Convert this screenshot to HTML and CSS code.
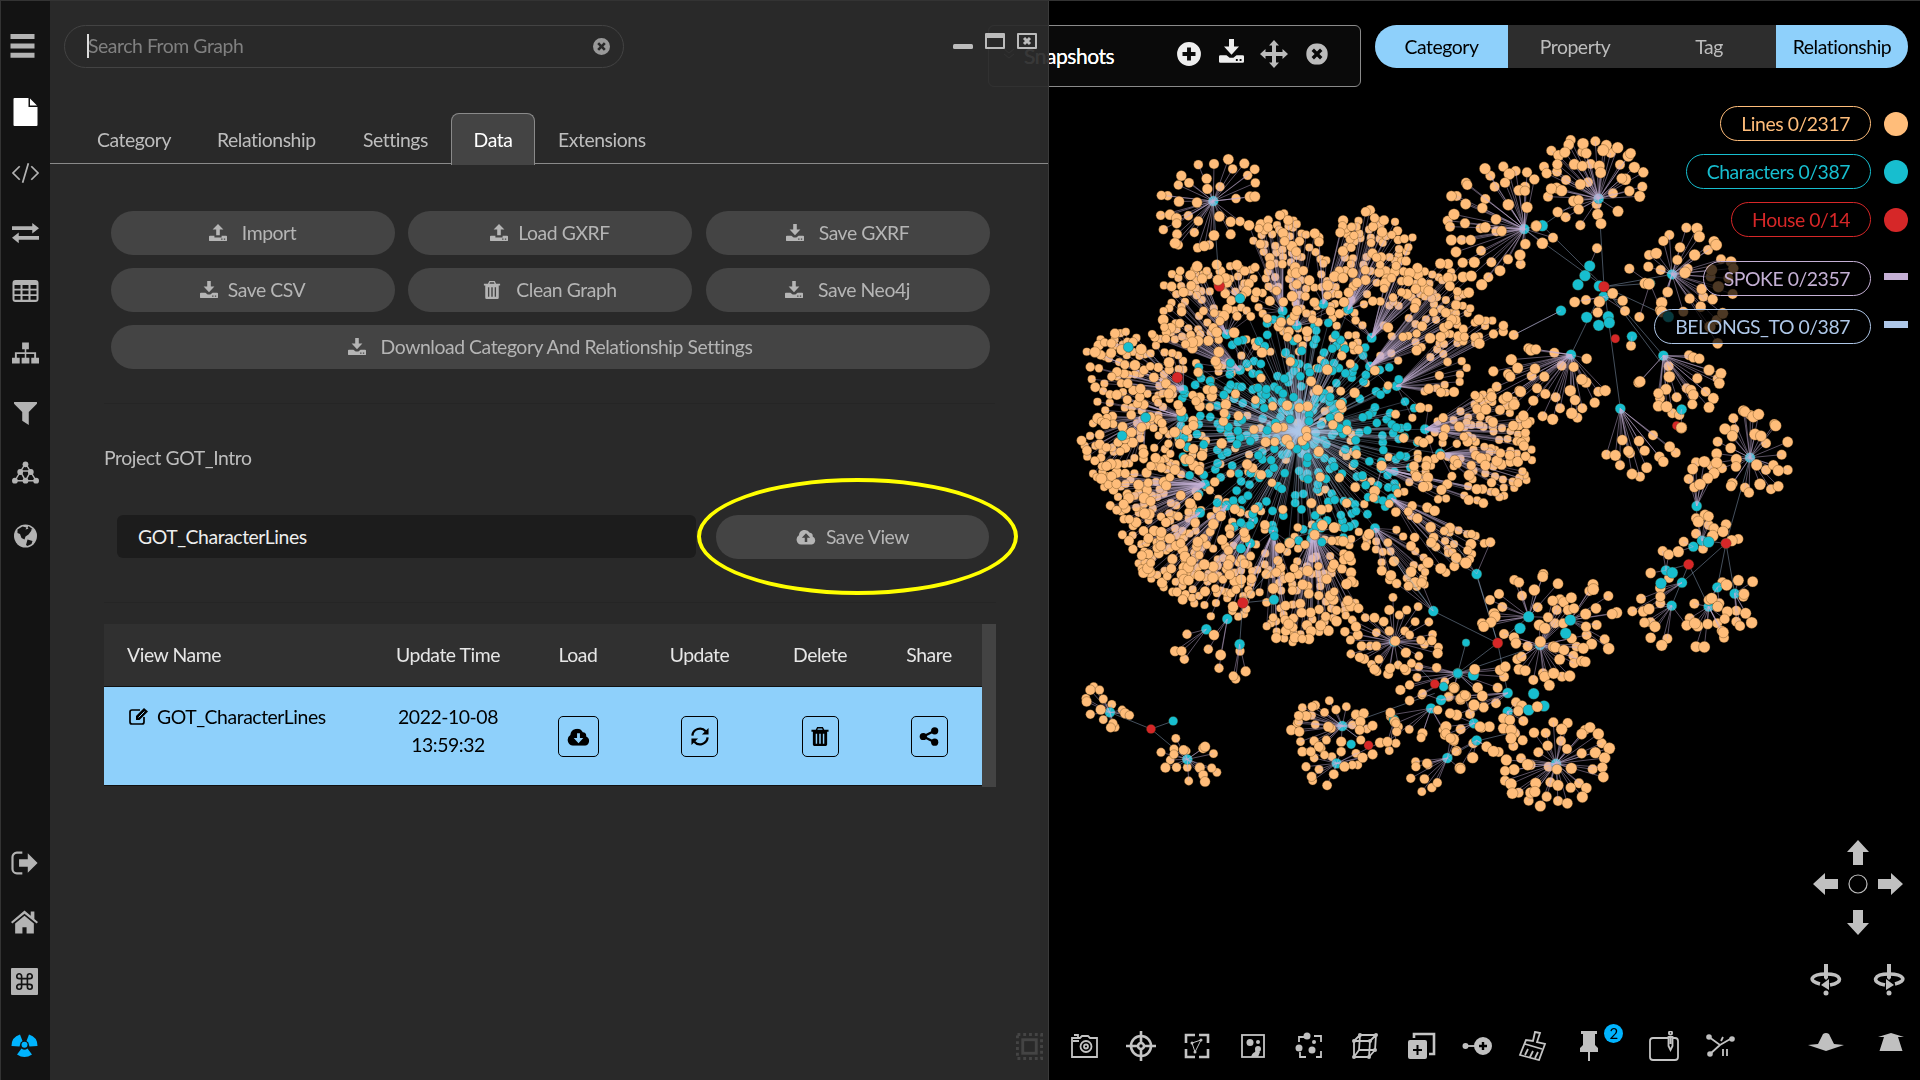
FILE: index.html
```html
<!DOCTYPE html>
<html lang="en">
<head>
<meta charset="utf-8">
<title>GOT_Intro</title>
<link rel="stylesheet" href="styles.css">
</head>
<body>
<svg class="sprite" aria-hidden="true">
  <symbol id="download" viewBox="0 0 20 20"><path d="M8 0h4v6h4l-6 6.500L4 6h4zM1 13h5l2.500 2h3l2.500-2h5a1 1 0 0 1 1 1v4a1 1 0 0 1-1 1H1a1 1 0 0 1-1-1v-4a1 1 0 0 1 1-1zm12.500 3v1.500H15V16zm3 0v1.500H18V16z" fill-rule="evenodd"/></symbol>
  <symbol id="upload" viewBox="0 0 20 20"><path d="M8 12.500h4V6h4L10 0 4 6h4zM1 13h5v2h8v-2h5a1 1 0 0 1 1 1v4a1 1 0 0 1-1 1H1a1 1 0 0 1-1-1v-4a1 1 0 0 1 1-1zm12.500 3v1.500H15V16zm3 0v1.500H18V16z" fill-rule="evenodd"/></symbol>
  <symbol id="trash" viewBox="0 0 20 20"><path d="M7 0h6l1.500 3H19v2h-1.500v13.500A1.500 1.500 0 0 1 16 20H4a1.500 1.500 0 0 1-1.500-1.500V5H1V3h4.500zm.8 1.500L7.200 3h5.600l-.6-1.500zM5.500 7v10.500H7V7zm3.700 0v10.500h1.600V7zM13 7v10.500h1.500V7z" fill-rule="evenodd"/></symbol>
  <symbol id="close" viewBox="0 0 20 20"><path d="M10 0a10 10 0 1 0 0 20 10 10 0 0 0 0-20zM7.200 5 10 7.800 12.800 5 15 7.200 12.200 10l2.800 2.800-2.200 2.200L10 12.200 7.200 15 5 12.800 7.800 10 5 7.200z" fill-rule="evenodd"/></symbol>
  <symbol id="cloud-up" viewBox="0 0 24 18"><path d="M6 18a6 6 0 0 1-2.500-11A7 7 0 0 1 16.500 4 4 4 0 0 1 20 8.500 5 5 0 0 1 19 18zM10.500 15h3v-5H17l-5-5.500L7 10h3.500z" fill-rule="evenodd"/></symbol>
  <symbol id="cloud-down" viewBox="0 0 24 18"><path d="M6 18a6 6 0 0 1-2.500-11A7 7 0 0 1 16.500 4 4 4 0 0 1 20 8.500 5 5 0 0 1 19 18zM10.500 5h3v5H17l-5 5.500L7 10h3.500z" fill-rule="evenodd"/></symbol>
</svg>
<div class="app">
  <nav class="rail">
    <div class="rail-top">
      <svg class="ic menu" viewBox="0 0 24 22"><path d="M1 0h22v4.500H1zM1 8.700h22v4.500H1zM1 17.200h22v4.500H1z"/></svg>
      <svg class="ic white" viewBox="0 0 24 28"><path d="M1 0h14v9h9v18a1 1 0 0 1-1 1H1a1 1 0 0 1-1-1V1a1 1 0 0 1 1-1zM16.500 0.500l7 7h-7z"/></svg>
      <svg class="ic line" viewBox="0 0 28 24"><path d="M8 5l-7 7 7 7M20 5l7 7-7 7M17 2l-6 20"/></svg>
      <svg class="ic" viewBox="0 0 28 24"><path d="M0 5h21V1.500L28 7l-7 5.500V9H0zM28 15H7v-3.500L0 17l7 5.500V19h21z"/></svg>
      <svg class="ic" viewBox="0 0 26 24"><path d="M3 1h20a3 3 0 0 1 3 3v16a3 3 0 0 1-3 3H3a3 3 0 0 1-3-3V4a3 3 0 0 1 3-3zM2 6v3.800h6V6zm8 0v3.800h6V6zm8 0v3.800h6V6zM2 11.600v3.600h6v-3.600zm8 0v3.600h6v-3.600zm8 0v3.600h6v-3.600zM2 17v3.800h6V17zm8 0v3.800h6V17zm8 0v3.800h6V17z" fill-rule="evenodd"/></svg>
      <svg class="ic" viewBox="0 0 28 24"><path d="M10.500 1h7v7h-2.700v3.200H25V17h3v6h-8v-6h3v-4h-8.200v4H18v6h-8v-6h3.200v-4H5v4h3v6H0v-6h3v-5.800h10.200V8h-2.700z"/></svg>
      <svg class="ic" viewBox="0 0 24 22"><path d="M1.500 1h21v1.500L15 10v12l-6-4v-8L1.500 2.500z"/></svg>
      <svg class="ic mesh" viewBox="0 0 28 24"><path d="M14 3L3 21h22zM8.500 11h11L14 21z"/><g class="dots"><circle cx="14" cy="4" r="3"/><circle cx="8.500" cy="12" r="3"/><circle cx="19.500" cy="12" r="3"/><circle cx="3" cy="21" r="3"/><circle cx="14" cy="21" r="3"/><circle cx="25" cy="21" r="3"/></g></svg>
      <svg class="ic" viewBox="0 0 24 24"><circle cx="12" cy="12" r="11.500"/><path class="cut" d="M4 5.500l5-3 4 1-1 2 4-1 2 2-3 4-3 2-1 3-3-1.500-1.500-4L4 9zM14 15.500l5 1.500-1 3-4 2-1.500-1zM15 2l4 3-2 1-3-2z"/></svg>
    </div>
    <div class="rail-bottom">
      <svg class="ic" viewBox="0 0 24 22"><path d="M10 1.500H5a4 4 0 0 0-4 4v11a4 4 0 0 0 4 4h5" fill="none" stroke="#b3b3b3" stroke-width="2"/><path d="M7 7.500h8V2l9 9-9 9v-5.500H7z"/></svg>
      <svg class="ic" viewBox="0 0 26 22"><path d="M13 0l6 5V1h3.500v7l3.500 3-1.300 1.500L13 3 1.300 12.500 0 11zM13 5l9 7.500V22h-7v-6h-4v6H4v-9.500z"/></svg>
      <svg class="ic cmd" viewBox="0 0 28 28"><rect width="28" height="28" rx="1"/><path d="M11 11h6v6h-6zM11 11V8.500A2.500 2.500 0 1 0 8.500 11H11M17 11h2.500A2.500 2.500 0 1 0 17 8.500V11M17 17v2.500a2.500 2.500 0 1 0 2.500-2.500H17M11 17H8.500a2.500 2.500 0 1 0 2.500 2.500V17"/></svg>
      <svg class="ic blue" viewBox="0 0 26 26"><path d="M8.500 13A4.500 4.500 0 0 1 11 9L8.500 2.500Q0 5 0 14l8 .5zM17.500 13A4.500 4.500 0 0 0 15 9l2.500-6.500Q26 5 26 14l-8 .5zM10 16.500a4.500 4.500 0 0 0 6 0l4.500 6q-7.500 5-15 0z"/><circle cx="13" cy="12.800" r="3"/></svg>
    </div>
  </nav>

  <main class="panel">
    <header class="panel-head">
      <div class="search"><i class="caret"></i><span>Search From Graph</span><svg class="clear"><use href="#close"/></svg></div>
      <div class="win">
        <svg viewBox="0 0 20 16"><rect y="11" width="20" height="5" rx="1.500"/></svg>
        <svg viewBox="0 0 20 16"><path d="M1 0h18a1 1 0 0 1 1 1v14a1 1 0 0 1-1 1H1a1 1 0 0 1-1-1V1a1 1 0 0 1 1-1zm1 5v9h16V5z" fill-rule="evenodd"/></svg>
        <svg viewBox="0 0 20 16"><path d="M1 0h18a1 1 0 0 1 1 1v14a1 1 0 0 1-1 1H1a1 1 0 0 1-1-1V1a1 1 0 0 1 1-1zm1 2v12h16V2z" fill-rule="evenodd"/><path d="M7 5l6 6M13 5l-6 6" stroke="#bbb" stroke-width="3"/></svg>
      </div>
    </header>
    <div class="tabs"><span class="t1">Category</span><span class="t2">Relationship</span><span class="t3">Settings</span><span class="active">Data</span><span class="t5">Extensions</span></div>
    <div class="actions">
      <button class="btn"><svg><use href="#upload"/></svg><span>Import</span></button>
      <button class="btn near"><svg><use href="#upload"/></svg><span>Load GXRF</span></button>
      <button class="btn"><svg><use href="#download"/></svg><span>Save GXRF</span></button>
      <button class="btn near"><svg><use href="#download"/></svg><span>Save CSV</span></button>
      <button class="btn"><svg><use href="#trash"/></svg><span>Clean Graph</span></button>
      <button class="btn"><svg><use href="#download"/></svg><span>Save Neo4j</span></button>
      <button class="btn wide"><svg><use href="#download"/></svg><span>Download Category And Relationship Settings</span></button>
    </div>
    <section class="project">
      <h2>Project GOT_Intro</h2>
      <div class="save-row">
        <div class="field">GOT_CharacterLines</div>
        <button class="btn near"><svg class="cloud"><use href="#cloud-up"/></svg><span>Save View</span></button>
        <i class="ring"></i>
      </div>
    </section>
    <section class="views">
      <div class="table">
        <div class="tr th"><span>View Name</span><span>Update Time</span><span>Load</span><span>Update</span><span>Delete</span><span>Share</span></div>
        <div class="tr row">
          <span class="name"><svg viewBox="0 0 20 18"><path d="M15 10v5a2 2 0 0 1-2 2H3a2 2 0 0 1-2-2V5a2 2 0 0 1 2-2h8" fill="none" stroke="#000" stroke-width="1.700"/><path d="M7 9l8-8 4 3.500-8.500 8.500H7z"/><path d="M9.500 10.500l6-6" stroke="#8ed0fb"/></svg>GOT_CharacterLines</span>
          <span class="time">2022-10-08<br>13:59:32</span>
          <span><b class="load"><svg viewBox="0 0 24 18"><use href="#cloud-down"/></svg></b></span>
          <span><b><svg class="sync" viewBox="0 0 20 20"><path d="M2 9a8 8 0 0 1 14-4.500M18 11A8 8 0 0 1 4 15.500"/><path class="fill" d="M19 1v7h-7zM1 19v-7h7z"/></svg></b></span>
          <span><b><svg viewBox="0 0 20 20"><use href="#trash"/></svg></b></span>
          <span><b><svg viewBox="0 0 20 20"><path d="M16 4L4 10l12 6" fill="none" stroke="#000" stroke-width="2.500"/><circle cx="16" cy="4" r="3.800"/><circle cx="4" cy="10" r="3.800"/><circle cx="16" cy="16" r="3.800"/></svg></b></span>
        </div>
      </div>
      <div class="scroll"></div>
    </section>
    <svg class="grip" viewBox="0 0 28 28"><rect x="1.500" y="1.500" width="25" height="25" stroke-dasharray="3 3"/><rect x="7" y="7" width="14" height="14"/></svg>
  </main>

  <section class="stage">
    <canvas class="graph" id="graph" width="871" height="1080"></canvas>
    <div class="snapshots">
      <svg class="chev" viewBox="0 0 12 12"><path d="M1 1l5 4 5-4M1 6l5 4 5-4"/></svg>
      <span>Snapshots</span>
      <svg viewBox="0 0 24 24"><path d="M12 1a11 11 0 1 0 0 22 11 11 0 0 0 0-22zm-1.800 5h3.600v4.200H18v3.600h-4.200V18h-3.600v-4.200H6v-3.600h4.200z" fill-rule="evenodd"/></svg>
      <svg class="dl"><use href="#download"/></svg>
      <svg class="dim" viewBox="0 0 26 26"><path d="M13-1l5 5.500h-3v6.500h6.500V8l5.500 5-5.500 5v-3H15v6.500h3L13 27l-5-5.500h3V15H4.500v3L-1 13l5.500-5v3H11V4.500H8z"/></svg>
      <svg class="dim" viewBox="-2 -2 24 24"><use href="#close" width="20" height="20"/></svg>
    </div>
    <div class="segments"><span class="on">Category</span><span>Property</span><span>Tag</span><span class="on">Relationship</span></div>
    <div class="legend">
      <div class="lg orange"><span>Lines 0/2317</span><i></i></div>
      <div class="lg cyan"><span>Characters 0/387</span><i></i></div>
      <div class="lg red"><span>House 0/14</span><i></i></div>
      <div class="lg purple edge"><span>SPOKE 0/2357</span><i></i></div>
      <div class="lg sky edge"><span>BELONGS_TO 0/387</span><i></i></div>
    </div>
    <div class="controls">
      <svg class="pad" viewBox="0 0 90 96"><path d="M45 0l11 12h-6v13H40V12h-6zM45 95l11-12h-6V70H40v13h-6zM0 44l12-11v6h13v10H12v6zM90 44L78 33v6H65v10h13v6z"/><circle cx="45" cy="44" r="9" fill="none" stroke="#bbb" stroke-width="1.200"/></svg>
      <div class="spins">
        <svg viewBox="0 0 32 32"><path d="M10 20C-3 17 1 10 16 10s19 8 4 11" fill="none" stroke="#c0c0c0" stroke-width="3.500"/><path d="M14 0h4v14l-2 2-2-2zM11 21l8-6v11z"/><circle cx="16" cy="29" r="2.500"/></svg>
        <svg class="flip" viewBox="0 0 32 32"><path d="M10 20C-3 17 1 10 16 10s19 8 4 11" fill="none" stroke="#c0c0c0" stroke-width="3.500"/><path d="M14 0h4v14l-2 2-2-2zM11 21l8-6v11z"/><circle cx="16" cy="29" r="2.500"/></svg>
      </div>
    </div>
    <div class="tools">
      <svg viewBox="0 0 30 30"><path d="M2 7h8l2-2h6l2 2h7v19H2zM3 10h6M4 4h4v2"/><circle cx="16" cy="15.500" r="5.500"/><circle cx="16" cy="15.500" r="2"/></svg>
      <svg viewBox="0 0 30 30" class="b"><circle cx="15" cy="15" r="10"/><circle cx="15" cy="15" r="3"/><path d="M15 0v12M15 18v12M0 15h12M18 15h12"/></svg>
      <svg viewBox="0 0 30 30"><path class="b" d="M4 12V4h9M17 4h9v8M26 18v8h-9M13 26H4v-8"/><path class="thin" d="M10 12l9-3-6 12z"/><g class="f"><circle cx="10" cy="12" r="1.500"/><circle cx="19" cy="9" r="1.500"/><circle cx="13" cy="21" r="1.500"/></g></svg>
      <svg viewBox="0 0 30 30"><rect x="4" y="4" width="22" height="22"/><g class="f"><circle cx="12" cy="11.500" r="3.500"/><circle cx="20" cy="11" r="2"/><circle cx="20" cy="18" r="3"/><path d="M18 18l4 3-2 5h-7q1-4 4-5z"/></g></svg>
      <svg viewBox="0 0 30 30"><path d="M5 11V6h6M20 5h7v6M27 20v6h-5M12 26H6v-5"/><g class="f"><circle cx="13" cy="5" r="3.500"/><circle cx="5" cy="17" r="3.500"/><circle cx="18" cy="19" r="3.500"/><circle cx="20" cy="11" r="2"/></g></svg>
      <svg viewBox="0 0 30 30"><path d="M10 4h16l-1 15H9zM4 10h16l-1 16H4zM4 10l6-6M20 10l6-6M19 26l6-7M4 26l5-7"/><g class="f"><circle cx="10" cy="4" r="2"/><circle cx="26" cy="4" r="2"/><circle cx="4" cy="10" r="2"/><circle cx="20" cy="10" r="2"/><circle cx="4" cy="26" r="2"/><circle cx="19" cy="26" r="2"/><circle cx="25" cy="19" r="2"/></g></svg>
      <svg viewBox="0 0 30 30"><path class="b" d="M8 7V3h20v20h-5"/><path class="f" d="M4 9h15a2 2 0 0 1 2 2v15a2 2 0 0 1-2 2H4a2 2 0 0 1-2-2V11a2 2 0 0 1 2-2zm6.500 5v4H7v2h3.500v4h2v-4H16v-2h-3.500v-4z" fill-rule="evenodd"/></svg>
      <svg viewBox="0 0 30 30"><path d="M3 15h10"/><path class="f" d="M3.500 12a3 3 0 1 0 0 6 3 3 0 0 0 0-6zM21 6a9 9 0 1 0 0 18 9 9 0 0 0 0-18zm-1.200 5h2.400v2.800H25v2.400h-2.800V19h-2.400v-2.800H17v-2.400h2.800z" fill-rule="evenodd"/></svg>
      <svg viewBox="0 0 30 30"><path d="M17 1l5 1-3 9 8 2-6 16L2 24l6-15 7 1zM7 13l17 5M7 24l3-6M12 26l3-6M17 27l3-6"/></svg>
      <div class="pin"><svg viewBox="0 0 30 30"><path class="f" d="M7 0h16v3h-2v11l3 3v4h-8v9h-2v-9H6v-4l3-3V3H7z"/></svg><em>2</em></div>
      <svg viewBox="0 0 30 30"><path d="M19 7H4a3 3 0 0 0-3 3v16a3 3 0 0 0 3 3h22a3 3 0 0 0 3-3V10a3 3 0 0 0-3-3h-2M19.500 6h4v9l-2 4-2-4zM21.500 6v7"/><circle cx="21.500" cy="2" r="1.600"/></svg>
      <svg viewBox="0 0 30 30"><path d="M4 6l11 8 12-7M15 14L5 23M16 10l2-4M18 18v7M22 18v7"/><g class="f"><circle cx="4" cy="6" r="2.800"/><circle cx="27" cy="8" r="2.800"/><circle cx="5" cy="23" r="2.800"/></g></svg>
      <svg class="tilt1" viewBox="0 0 36 18"><path class="f" d="M0 12l10-1 5-10q3-2 6 0l5 10 10 1-18 6z"/></svg>
      <svg class="tilt2" viewBox="0 0 26 18"><path class="f" d="M0 4l13-4 13 4h-6l4.500 14h-23L6 4z"/></svg>
    </div>
  </section>
</div>
<script src="graph.js"></script>
</body>
</html>
```
FILE: styles.css
```css
* { box-sizing: border-box; }
body { margin: 0; background: #000; font: 19.4px/1.2 Lato, "Liberation Sans", sans-serif; letter-spacing: -.45px; color: #bdbdbd; }
.sprite { display: none; }
.app { display: flex; width: 1920px; height: 1080px; overflow: hidden; border-top: 1px solid #333; }
svg { display: block; fill: #bdbdbd; flex: none; }
button { font: inherit; letter-spacing: inherit; color: inherit; border: 0; padding: 0; }

.rail { width: 50px; background: #131313; display: flex; flex-direction: column; justify-content: space-between; padding: 33px 0 22px; border-left: 1px solid #333; z-index: 2; }
.rail-top, .rail-bottom { display: grid; justify-items: center; }
.rail-top { grid-template-rows: 64px 63px 60px 58px 62px 60px 59px 64px 24px; padding-right: 1px; }
.rail-bottom { grid-template-rows: 59px 58px 64px 26px; padding-right: 3px; }
.ic { width: 27px; height: 24px; fill: #b3b3b3; }
.menu { margin-right: 5px; }
.rail-top .white { fill: #fff; height: 28px; }
.line { fill: none; stroke: #b3b3b3; stroke-width: 1.8; }
.mesh { fill: none; stroke: #b3b3b3; stroke-width: 1.5; }
.mesh .dots { fill: #b3b3b3; stroke: none; }
.cut { fill: #131313; }
.cmd { width: 27px; height: 27px; }
.cmd path { fill: none; stroke: #131313; stroke-width: 1.7; }
.ic.blue { fill: #00b4ff; height: 26px; }

.panel { width: 999px; background: rgba(44,44,44,.94); position: relative; z-index: 1; border-right: 1px solid #3a3a3a; }
.panel-head { display: flex; justify-content: space-between; padding: 24px 11px 0 14px; height: 112px; }
.search { width: 560px; height: 43px; border: 1px solid #434343; border-radius: 22px; display: flex; align-items: center; padding: 0 13px 0 22px; color: #808080; line-height: 24px; }
.search span { margin-top: -2px; }
.caret { width: 2px; height: 24px; background: #ddd; margin: -2px -1px 0 0; }
.clear { width: 17px; height: 17px; margin-left: auto; fill: #999; }
.win { display: flex; gap: 12px; padding-top: 8px; }
.win svg { width: 20px; height: 16px; fill: #bbb; }
.tabs { display: flex; height: 51px; border-bottom: 1px solid #8a8a8a; padding-left: 47px; line-height: 53px; white-space: nowrap; }
.tabs .t1 { width: 120px; }
.tabs .t2 { width: 146px; }
.tabs .t3 { width: 88px; }
.tabs .t5 { margin-left: 23px; }
.tabs .active { width: 84px; height: 52px; background: #444; border: 1px solid #8a8a8a; border-bottom: 0; border-radius: 8px 8px 0 0; text-align: center; color: #fff; line-height: 51px; }
.actions { display: grid; grid-template-columns: 284px 284px 284px; column-gap: 13.5px; row-gap: 13px; padding: 47px 0 0 60.5px; }
.btn { height: 44px; border-radius: 22px; background: #444; display: flex; align-items: center; justify-content: center; gap: 15px; color: #b5b5b5; }
.btn.near { gap: 10px; }
.btn svg { width: 18px; height: 18px; fill: #b5b5b5; }
.btn svg.cloud { width: 20px; height: 16px; }
.wide { grid-column: 1 / 4; }
.project { margin: 34px 53px 0 54px; border-top: 1px solid #252525; height: 199px; }
h2 { font-size: inherit; font-weight: 400; margin: 42px 0 0; line-height: 24px; }
.save-row { display: flex; margin: 45px 6px 0 13px; position: relative; justify-content: space-between; }
.field { width: 579px; height: 43px; background: #1c1c1c; border-radius: 6px; line-height: 43px; padding-left: 21px; color: #eee; }
.save-row .btn { width: 273px; }
.ring { position: absolute; left: 580px; top: -37px; width: 321px; height: 117px; border: 4px solid #ff0; border-radius: 50%; }
.views { margin: 0 52px 0 54px; border-top: 1px solid #252525; padding-top: 21px; display: flex; }
.table { width: 878px; }
.scroll { width: 14px; height: 163px; background: #434343; }
.tr { display: grid; grid-template-columns: 279px 130px 130px 113px 128px 98px; text-align: center; }
.tr > span:first-child { text-align: left; padding-left: 23px; }
.tr > span:last-child { padding-right: 8px; }
.th { background: #303030; height: 62px; line-height: 62px; color: #e6e6e6; }
.row { background: #8ed0fb; height: 100px; color: #000; border-top: 1px solid #111; border-bottom: 1px solid #111; }
.row span { display: flex; justify-content: center; padding-top: 29px; }
.row .name { justify-content: flex-start; padding: 17px 0 0 25px !important; gap: 8px; line-height: 26px; }
.name svg { width: 20px; height: 18px; margin-top: 3px; fill: #000; }
.row .time { padding-top: 16px; line-height: 28px; }
.row b { width: 37px; height: 41px; border: 1.500px solid #000; border-radius: 5px; display: grid; place-items: center; }
.row b.load { width: 41px; }
.row b svg { width: 20px; height: 19px; fill: #000; }
.row b.load svg { width: 23px; height: 18px; }
.row .sync { fill: none; stroke: #000; stroke-width: 2.400; }
.row .sync .fill { fill: #000; stroke: none; }
.grip { position: absolute; right: 5px; bottom: 20px; width: 27px; height: 27px; fill: none; stroke: #444; stroke-width: 3; }

.stage { width: 871px; position: relative; display: flex; flex-direction: column; align-items: flex-end; padding: 24px 12px 0 0; }
.graph { position: absolute; left: 0; top: -1px; }
.snapshots { position: absolute; left: -61px; top: 24px; width: 373px; height: 62px; border: 1.500px solid #8a8a8a; border-radius: 6px; background: #0a0a0a; display: flex; align-items: center; color: #fff; padding: 0 30px 5px 14px; gap: 17px; }
.snapshots span { margin: 5px 43px 0 -8px; width: 95px; font-size: 21px; text-shadow: 0 0 .6px #fff; }
.snapshots svg { width: 26px; height: 26px; fill: #eee; }
.snapshots .chev { width: 12px; height: 12px; fill: none; stroke: #999; }
.snapshots .dl { width: 25px; height: 25px; margin-top: -4px; }
.snapshots .dim { fill: #bbb; overflow: visible; }
.segments { position: relative; display: grid; grid-template-columns: 133px 134px 134px 132px; height: 43px; line-height: 43px; border-radius: 22px; overflow: hidden; background: #2d2d2d; text-align: center; }
.segments .on { background: #8ed0fb; color: #000; }
.legend { position: relative; display: flex; flex-direction: column; align-items: flex-end; gap: 13px; margin-top: 38px; }
.lg { display: flex; align-items: center; gap: 13px; color: var(--c); height: 35px; }
.lg span { height: 35px; line-height: 33px; border: 1.500px solid var(--c); border-radius: 18px; padding: 0 20px; background: rgba(0,0,0,.7); }
.lg i { width: 24px; height: 24px; border-radius: 50%; background: var(--c); }
.lg.edge i { height: 7px; border-radius: 0; margin-top: -4px; }
.purple { margin-top: 11px; }
.orange { --c: #ffbd7a; } .cyan { --c: #17becf; } .red { --c: #d62728; } .purple { --c: #c5b0d5; } .sky { --c: #aec7e8; }
.controls { position: relative; margin-top: auto; display: flex; flex-direction: column; align-items: flex-end; gap: 28px; }
.pad { width: 90px; height: 96px; margin-right: 5px; fill: #c0c0c0; }
.spins { display: flex; gap: 31px; margin-right: 3px; }
.spins svg { width: 32px; height: 32px; fill: #c0c0c0; }
.flip { transform: scaleX(-1); }
.tools { position: relative; width: 871px; height: 84px; margin-right: -12px; padding: 35px 16px 0 21px; display: flex; gap: 26px; }
.tools svg { width: 30px; height: 30px; fill: none; stroke: #c4c4c4; stroke-width: 1.800; }
.tools .b { stroke-width: 2.600; }
.tools .thin { stroke-width: 1; }
.tools .f { fill: #c0c0c0; stroke: none; }
.pin { position: relative; margin-right: 19px; }
.pin em { position: absolute; left: 30px; top: -7px; width: 19px; height: 19px; border-radius: 50%; background: #00b4ff; color: #000; font: 15px/19px Lato, sans-serif; text-align: center; }
.tools .tilt1 { width: 36px; height: 18px; margin: 2px 0 0 auto; }
.tools .tilt2 { width: 26px; height: 18px; margin: 2px 0 0 8px; }
.tools .tilt1 + .tilt2 { margin-left: 8px; }
```
FILE: graph.js
```js
// Node positions are stored per tile: [origin x, origin y, x scale, y scale].
const tiles = { N: [1060, 120, 3, 2.8], E: [1420, 120, 3, 3], S: [1440, 390, 3, 3], W: [1060, 560, 2.703, 3] };
const ctx = document.getElementById('graph').getContext('2d');
ctx.translate(-1049, 0);
let seed = 7;
const rnd = () => { seed = (seed * 1664525 + 1013904223) >>> 0; return seed / 4294967296; };
const at = (t, x, y) => { const o = tiles[t]; return [o[0] + x / o[2], o[1] + y / o[3]]; };
const parse = (t, s) => s.trim().split(/\s+/).map(p => at(t, ...p.split(',').map(Number)));
const ORANGE = '#ffbd7a', CYAN = '#17becf', RED = '#d62728';
function dot(p, r, c) {
  ctx.beginPath(); ctx.arc(p[0], p[1], r, 0, 7); ctx.fillStyle = c; ctx.fill();
  ctx.strokeStyle = 'rgba(70,45,10,.55)'; ctx.lineWidth = .6; ctx.stroke();
}
function edge(a, b, c) {
  ctx.beginPath(); ctx.moveTo(...a); ctx.lineTo(...b); ctx.strokeStyle = c; ctx.lineWidth = .9; ctx.stroke();
}
const SPOKE = 'rgba(197,176,213,.4)', BELONGS = 'rgba(174,199,232,.3)';

// Dense community around the central house
const outline = parse('N', `60,905 75,860 120,830 80,750 65,690 85,630 150,600 205,580 260,610 300,560 310,500 300,440 350,410 430,400 480,385 540,390 580,370 550,330 560,280
650,250 715,265 720,310 760,295 785,340 770,380 820,390 840,370 820,320 840,285 930,245 1030,285 1070,345 1040,390 1110,425 1150,395 1230,400 1240,500
1310,545 1365,600 1270,635 1170,630 1240,690 1240,740 1290,760 1400,800 1425,880 1410,1010 1300,1080 1200,1080 1060,1110 1200,1110 1240,1160 1290,1185 1220,1240
1170,1270 1080,1310 1010,1300 950,1270 880,1310 890,1370 860,1400 780,1445 705,1465 610,1440 630,1390 610,1330 560,1330 560,1400 440,1390 395,1360 300,1310 200,1240 175,1160 155,1110 140,1040 80,980`);
const centre = at('N', 717, 872);
const hubs = parse('N', `865,530 935,610 1095,866 1140,934 965,975 945,1143 995,1060 760,1155 580,1120 500,1080 420,1100 435,1020 370,755 370,832 257,833 205,636 500,600 540,700 540,500 668,535 710,575 790,515 1010,745 930,690 640,1150 570,1185`);
const inside = (x, y) => {
  let c = false;
  for (let i = 0, j = outline.length - 1; i < outline.length; j = i++) {
    const [a, b] = outline[i], [d, e] = outline[j];
    if ((b > y) !== (e > y) && x < (d - a) * (y - b) / (e - b) + a) c = !c;
  }
  return c;
};
const ang = p => Math.atan2(p[1] - centre[1], p[0] - centre[0]);
const dist = (a, b) => Math.hypot(a[0] - b[0], a[1] - b[1]);
const crowd = [];
for (let k = 0; k < 60000 && crowd.length < 1280; k++) {
  const p = [1078 + rnd() * 460, 200 + rnd() * 450];
  if (!inside(...p)) continue;
  const d = dist(p, centre);
  // the right-hand side is sparser between the core and the rim
  const side = p[0] > centre[0] + 60 && d < 175 ? .5 : 1;
  if (rnd() > side * (d < 95 ? .2 : d < 130 ? .5 : 1)) continue;
  if (crowd.some(q => dist(p, q) < 4.2)) continue;
  crowd.push(p);
}
const people = [];
for (let k = 0; k < 9000 && people.length < 310; k++) {
  const a = rnd() * 6.283, r = 14 + Math.pow(rnd(), .85) * 108, p = [centre[0] + Math.cos(a) * r, centre[1] + Math.sin(a) * r * .95];
  if (people.some(q => dist(p, q) < 4.6)) continue;
  people.push(p);
}
crowd.forEach(p => {
  let best = centre, score = .34;
  hubs.forEach(h => {
    let s = Math.abs(ang(p) - ang(h)); if (s > Math.PI) s = 6.283 - s;
    if (s < score && dist(h, centre) < dist(p, centre)) { score = s; best = h; }
  });
  p.hub = best;
});
crowd.forEach((p, i) => { if (i % 2) dot(p, 4.1, ORANGE); });
people.forEach((p, i) => { if (i % 3) dot(p, 4.4, CYAN); });
hubs.forEach(p => dot(p, 5, CYAN));
crowd.forEach(p => edge(p.hub, p, SPOKE));
people.forEach(p => edge(centre, p, BELONGS));
hubs.forEach(p => edge(centre, p, BELONGS));
people.forEach((p, i) => { if (i % 3 === 0) dot(p, 4.4, CYAN); });
crowd.forEach((p, i) => { if (!(i % 2)) dot(p, 4.2 + rnd() * 1.3, ORANGE); });

// Links between communities
[['N', '1248,1270 1313,1465'], ['N', '1120,1375 1313,1465'], ['N', '1248,1270 1160,1150'], ['N', '1248,1270 1100,1190'], ['N', '1120,1375 1000,1230'], ['N', '1120,1375 960,1170'], ['N', '460,227 478,465'],
 ['N', '548,1352 760,1120'], ['N', '548,1352 539,1468'], ['N', '548,1352 642,1343'], ['N', '548,1352 540,1220'],
 ['E', '313,327 552,500'], ['E', '367,317 552,500'], ['E', '536,236 552,500'], ['E', '756,463 552,500'], ['E', '690,490 552,500'], ['E', '453,704 552,500'],
 ['E', '552,500 601,866'], ['E', '552,500 730,707'], ['E', '552,500 720,725'], ['E', '552,500 745,590'], ['E', '281,645 423,572'], ['E', '367,317 450,260'],
 ['S', '858,460 930,203'], ['S', '858,460 726,578'], ['S', '858,460 832,592'], ['S', '858,460 884,611'], ['S', '746,523 806,650'], ['S', '746,523 678,541'], ['S', '746,523 695,647'], ['S', '858,460 786,452'],
 ['S', '173,759 53,850'], ['S', '173,759 203,909'], ['S', '173,759 266,680'], ['S', '53,850 300,765'], ['S', '53,850 78,758'], ['S', '110,552 173,759'], ['S', '53,850 110,905'], ['S', '770,348 770,390'],
 ['W', '135,457 246,507'], ['W', '306,483 246,507'], ['W', '344,598 246,507'], ['W', '763,498 1013,400'], ['W', '834,556 763,498'], ['W', '903,245 1013,372'], ['W', '1127,543 1205,522'], ['W', '1047,594 1127,543']
].forEach(([t, s]) => { const p = parse(t, s); edge(p[0], p[1], 'rgba(150,175,205,.5)'); });

// Satellite communities: tile, hub nodes, line nodes
const groups = [
['N', '460,227', `415,125 462,123 505,110 518,137 553,122 584,138 563,155 586,176 364,156 355,182 387,176 440,164 480,187 442,193 304,211 323,212 357,228 411,231 528,220 570,215 585,214 302,267 330,265 350,275 385,268 415,283 478,270 310,307 350,290 351,320 403,315 462,323 512,285 540,284 512,320 345,345 355,350 413,358 433,353 448,350`],
['E', '313,327', `138,188 142,195 195,146 211,167 250,140 268,162 287,153 321,157 343,178 224,200 255,188 297,211 315,200 315,213 94,228 110,228 137,252 187,264 196,237 265,254 321,262 83,302 102,283 135,310 90,320 228,298 196,322 229,334 245,333 94,360 125,360 152,360 108,396 183,392 128,428 163,427 214,427 264,418 300,405 302,433 316,372 367,370 399,353 349,318 154,468 205,472 185,494 240,452 182,325`],
['E', '536,236', `452,60 446,74 489,71 526,64 559,76 593,83 394,92 416,106 435,97 487,96 499,100 549,91 572,99 625,108 632,100 600,134 643,142 670,157 372,140 380,160 412,133 411,155 463,133 487,138 512,132 538,138 542,158 438,180 410,204 394,206 384,230 425,212 481,193 504,187 616,178 605,175 667,200 628,213 659,229 579,220 461,243 476,240 530,253 476,268 413,276 437,292 533,283 543,311 481,316 594,274`],
['E', '756,463', `799,323 831,325 838,350 748,345 730,363 780,382 864,390 882,364 889,375 687,405 709,400 685,440 722,450 772,420 824,405 803,446 795,458 875,450 903,418 933,425 940,445 925,475 938,522 895,500 872,470 845,507 809,536 850,530 743,516 725,548 720,570 725,575 878,538 790,575 842,560 908,580 890,600 893,670 870,620`],
['E', '690,490', '628,446 675,490 687,492 658,591 725,575'],
['E', '551,530', '578,520 538,545 533,577 498,540 464,546 608,542 615,573'],
['E', '495,467', '531,385'], ['E', '636,649', '633,677'], ['E', '423,572', '281,645'],
['E', '453,704', `325,685 333,690 348,688 403,698 500,716 461,741 425,737 274,719 293,744 264,762 271,770 220,754 335,768 345,746 373,770 298,812 351,805 376,822 407,832 302,815 340,842 420,865 451,812 465,840 487,865 498,787 485,778 535,815 556,812 524,848 368,889 398,898 455,880 472,893 310,887 283,853 250,838 262,830 240,870 230,800 215,830`],
['E', '730,707', `807,706 820,712 838,716 746,739 748,770 660,785 655,788 867,750 903,760 893,776 898,790 832,775 800,805 738,808 715,820 720,835 813,810 820,825 857,815 880,835 715,858 770,832 817,853 867,862 757,880 740,860`],
['E', '785,868', '778,885 784,923'],
['E', '601,866', `699,946 607,960 657,963 559,1004 586,1006 625,993 630,1000 674,992 749,980 767,998 718,1010 730,1025 600,1036 680,1043 636,1062 660,1070`],
['S', '930,203', `880,85 910,62 915,65 931,75 940,80 956,73 1003,102 1007,107 855,117 883,118 945,133 963,138 833,155 877,138 872,174 978,160 1043,156 830,191 1025,194 889,208 830,218 846,235 888,230 950,225 978,240 1000,225 1015,242 1043,240 877,280 873,288 915,293 927,308 960,283 993,298 1015,289`],
['S', '770,348', '768,217 793,215 758,237 815,228 822,250 803,265 746,267 763,292 780,283'],
['S', '786,452', '768,385 795,375 806,379 806,405 822,415 858,403 768,431 818,438 849,425 789,476 775,395'],
['S', '760,470', '731,455 715,485'], ['S', '858,460', '895,447 875,452'], ['S', '678,541', '668,483 686,494 632,549 687,564'],
['S', '726,578', '603,626 661,594 661,620 577,664 610,664'],
['S', '695,647', '661,640 627,657 613,698 632,697 645,710 632,743 682,746 665,766 740,706'],
['S', '884,611', '910,620 895,571 938,575 889,662 917,670 935,698 889,695 900,708 912,612'],
['S', '832,592', '847,577 860,585 806,630 838,640 815,625'],
['S', '806,650', '763,641 833,650 862,665 749,685 773,708 803,702 832,700 854,687 850,727 852,743 768,770 793,771 845,722 765,700'],
['S', '266,680', `223,570 237,577 308,560 310,552 354,581 283,600 246,617 177,612 150,630 187,651 162,670 165,680 126,700 153,697 131,710 293,652 324,682`],
['S', '391,690', '470,705 468,655 437,672 505,618 459,583 460,598 448,603 530,668 516,672 494,748 506,776 438,710'],
['S', '300,765', `192,732 222,742 228,760 263,769 301,755 338,632 360,628 371,636 394,623 350,660 384,660 402,655 345,700 340,770 346,772 410,770 455,762 430,775 400,797 372,780 359,808 402,820 425,813 436,815 232,808 237,838 256,842 309,850 314,860 341,850 366,860 389,858 328,886 280,870 298,705 315,715 440,735 370,700 395,745 245,800`],
['S', '110,552', '151,457 78,519'],
['S', '53,850', '104,838 180,840 196,830 192,860 42,893 113,893 173,893 127,918'],
['S', '203,909', '168,940 131,952 62,928 26,920 78,918 102,945 90,972 50,975'],
['S', '203,965', '228,937 246,947 235,963 292,950 190,985 210,990 250,993 190,1015 213,1020 225,1030 213,1045 248,1051 220,1068'],
['S', '102,1000', '125,1013 148,1010 18,1010 62,1018 15,1035 40,1048 72,915 30,970 120,1010'],
['S', '110,1051', '100,1060 140,1070 160,1084 176,1086 60,1134 98,1103 50,1083'],
['S', '348,1121', `340,997 383,999 282,1028 317,1029 365,1018 425,1032 435,1020 450,1012 475,1032 363,1053 323,1067 381,1077 295,1087 425,1090 466,1088 485,1060 508,1075 494,1104 243,1105 199,1110 263,1124 272,1125 222,1139 195,1143 326,1130 351,1138 394,1135 458,1138 487,1132 490,1161 195,1172 213,1182 287,1180 331,1177 354,1186 392,1193 417,1180 439,1194 217,1210 236,1208 272,1208 285,1205 266,1232 320,1220 301,1248 354,1233 382,1240 427,1221`],
['W', '135,457', '91,380 82,390 107,390 70,415 72,425 117,417 140,433 110,449 82,463 168,450 176,460 188,466 117,479 143,490 137,503 149,502'],
['W', '344,598', '313,535 308,567 273,577 298,600 308,583 334,570 341,573 387,565 392,560 415,581 285,623 315,622 344,622 378,623 410,624 424,637 387,645 392,665 348,663'],
['W', '763,498', `728,422 690,436 682,440 655,443 665,468 645,467 680,466 715,457 746,449 774,440 800,464 821,460 641,490 625,510 647,515 690,494 733,505 725,500 650,545 655,575 687,543 706,565 720,540 760,545 790,495 812,485 810,510 830,507 845,497 813,540 645,485 700,560`],
['W', '748,610', '800,580 818,593 845,583 735,590 715,585 678,575 687,594 760,575 790,615 805,615 769,620 665,620 700,628 740,643 680,650 683,662 722,676 865,548'],
['W', '903,480', '890,572 908,550 910,515 893,470 905,485 885,547 915,500 893,458'],
['W', '1003,445', '944,508 980,520 976,533 893,465 908,490 885,545 1035,510 1043,520 1021,450'],
['W', '903,245', `900,112 890,150 917,165 968,140 875,185 850,173 825,173 937,150 960,185 997,186 932,213 890,213 855,218 805,225 785,240 786,282 770,215 815,258 838,258 855,258 822,297 842,313 810,292 862,298 857,335 887,342 892,325 914,315 935,278 945,225 1007,223 1005,242 975,240 985,253 1023,262 1021,280 970,288 906,243 850,328 790,180 807,145 800,200`],
['W', '1075,340', '970,320 1018,323 935,330 965,352 945,375 920,390 978,405 945,422 950,310 1040,365 1065,385 930,325'],
['W', '1030,420', '1050,410 1083,415 1095,405 980,400'],
['W', '1047,594', '961,605 962,620 992,610 995,615 948,655 985,657 978,695 1005,683 1020,668 1070,575 1083,627 1055,535 1065,545'],
['N', '439,1426', '381,1440 345,1487 365,1487 373,1510'],
['N', '502,1397', '445,1482 462,1442 482,1498 477,1535'],
['N', '539,1468', '540,1487 557,1544 520,1557 527,1565'],
['N', '1120,1375', '1010,1298 1045,1305 1085,1295']
];
const laid = groups.map(([t, h, d]) => ({ t, hub: parse(t, h)[0], dots: parse(t, d) }));
const size = t => t === 'N' ? 4.7 : t === 'W' ? 4.4 : 5;
laid.forEach(g => g.dots.forEach((p, i) => { if (i % 3 === 0) dot(p, size(g.t), ORANGE); }));
laid.forEach(g => dot(g.hub, 5.2, CYAN));
laid.forEach(g => g.dots.forEach(p => edge(g.hub, p, 'rgba(197,176,213,.5)')));
laid.forEach(g => g.dots.forEach((p, i) => { if (i % 3) dot(p, size(g.t) + rnd() * .8, ORANGE); }));

parse('E', '509,438 495,467 474,494 538,498 500,592 536,616 565,590 568,608 367,317 745,590').forEach(p => dot(p, 5.6, CYAN));
parse('S', '240,715 391,690 377,730 266,680 281,911 312,948 266,960 100,855 806,456 697,548 663,580').forEach(p => dot(p, 5.6, CYAN));
parse('S', '78,758').forEach(p => dot(p, 4, CYAN));
parse('W', '306,483 787,553 1037,380 1075,340').forEach(p => dot(p, 4.6, CYAN));
parse('N', '642,1343 540,500 205,636 257,833 186,884 543,1200').forEach(p => dot(p, 5, CYAN));
parse('S', '292,950 104,838').forEach(p => dot(p, 5.4, ORANGE));
parse('N', '478,465 352,721 548,1352').forEach(p => dot(p, 5.4, RED));
parse('N', '474,448').forEach(p => dot(p, 5.4, ORANGE));
parse('E', '552,500').forEach(p => dot(p, 5.4, RED));
parse('E', '586,656 770,917').forEach(p => dot(p, 4.4, RED));
parse('E', '784,923 578,520 349,318').forEach(p => dot(p, 5.4, ORANGE));
parse('S', '858,460 746,523 173,759').forEach(p => dot(p, 5.2, RED));
parse('W', '246,507 834,556 1013,372').forEach(p => dot(p, 4.6, RED));
```
